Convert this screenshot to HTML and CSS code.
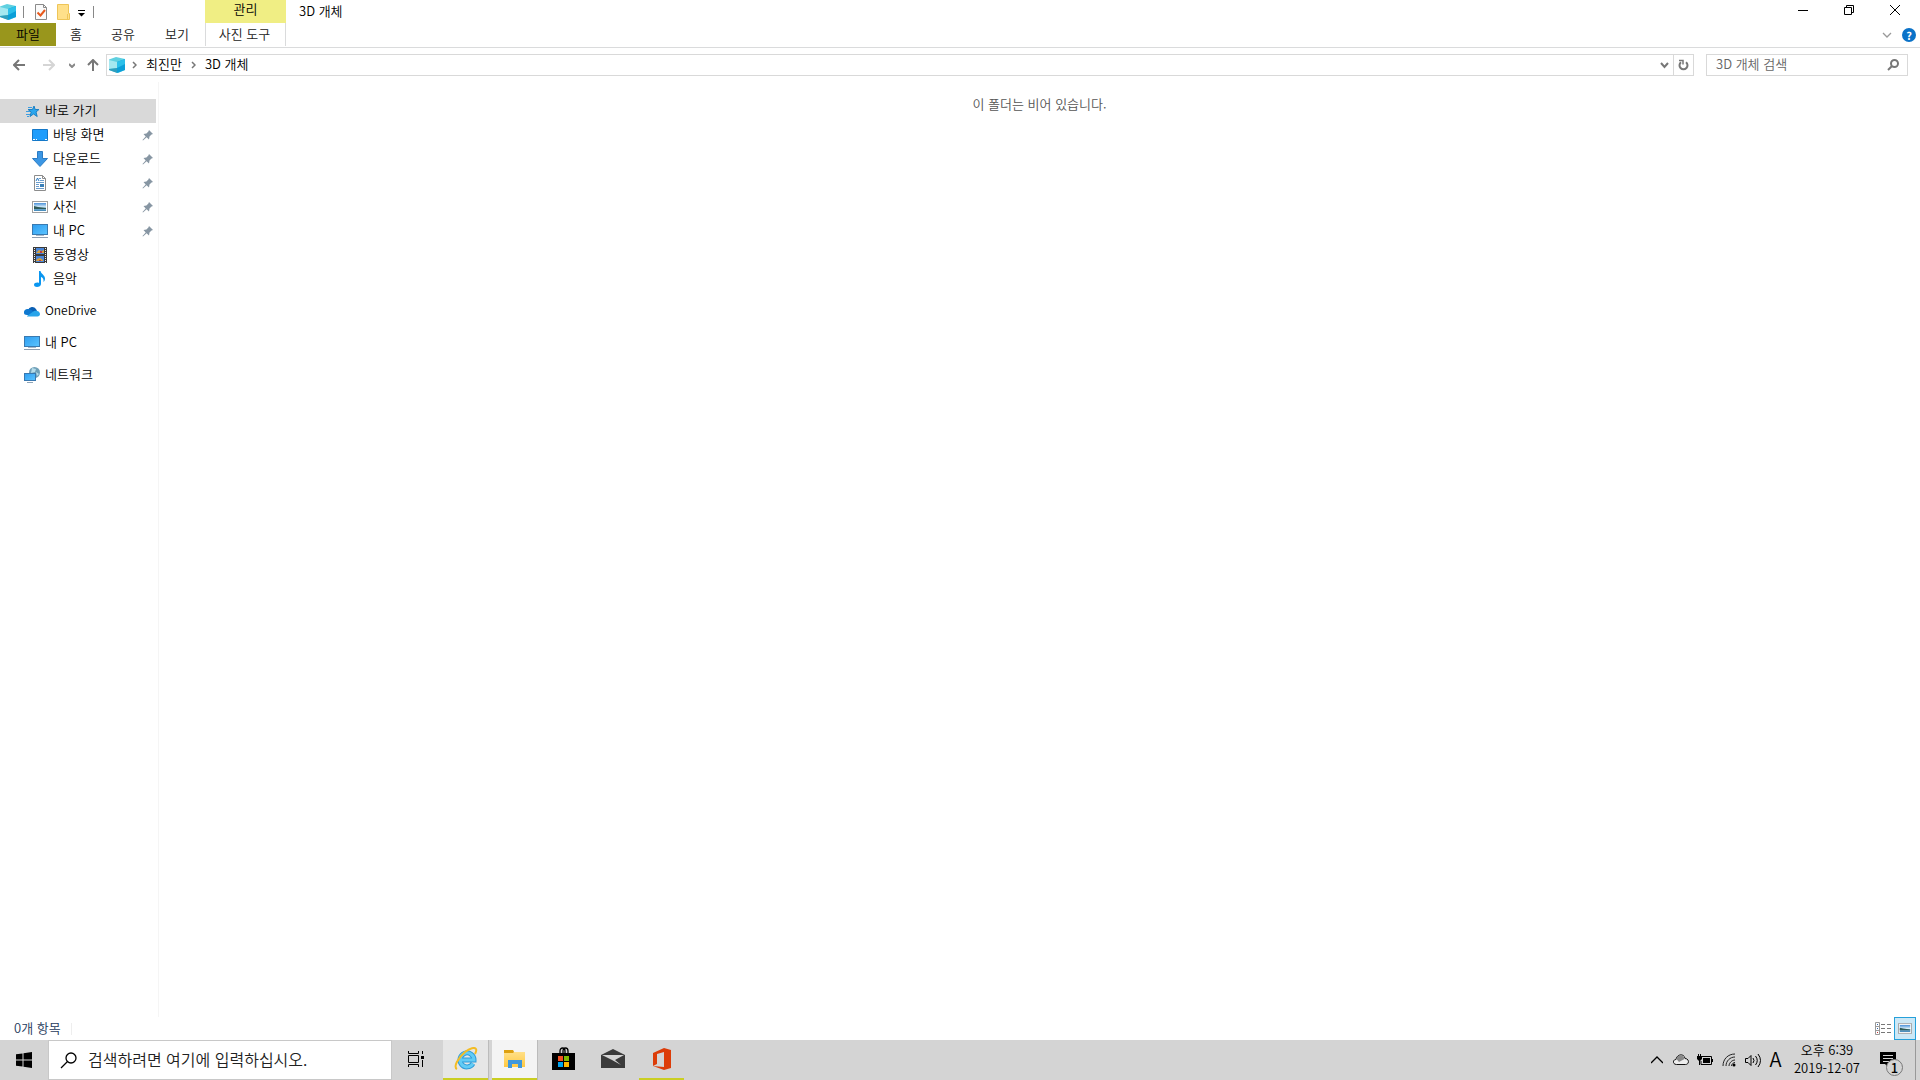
FILE: index.html
```html
<!DOCTYPE html>
<html lang="ko">
<head>
	<meta charset="utf-8" />
	<meta name="viewport" content="width=device-width,initial-scale=1.0" />
	<title>3D 개체</title>
	<link rel="stylesheet" href="styles.css">
</head>
<body>
<!-- shared icons -->
<svg class="defs" aria-hidden="true">
	<defs>
		<linearGradient id="blue" x1="0" y1="0" x2="1" y2="1">
			<stop offset="0" stop-color="#2d9df0"/>
			<stop offset="1" stop-color="#5cc4ff"/>
		</linearGradient>
		<linearGradient id="gold" x1="0" y1="0" x2="0" y2="1">
			<stop offset="0" stop-color="#ffe291"/>
			<stop offset="1" stop-color="#ffc941"/>
		</linearGradient>
		<linearGradient id="sky" x1="0" y1="0" x2="0" y2="1">
			<stop offset="0" stop-color="#4a90d9"/>
			<stop offset=".5" stop-color="#d8eefa"/>
			<stop offset=".6" stop-color="#8fc0dc"/>
			<stop offset="1" stop-color="#3f86b8"/>
		</linearGradient>
		<symbol id="cube" viewBox="0 0 16 16">
			<path d="M0 2.500L7 0l9 2v11l-7 3-9-3z" fill="#5fd0e0"/>
			<path d="M0 3l8 2v6l-8 1z" fill="#a5e8f0"/>
			<path d="M0 12l8-1v5l-8-3z" fill="#2f9fbe"/>
			<path d="M8 5l8-3v11l-8 3z" fill="#0b9fd8"/>
			<path d="M8 5l8-3v5l-8 4z" fill="#2cc0ea"/>
		</symbol>
		<symbol id="pc" viewBox="0 0 16 16">
			<rect x=".5" y="1.5" width="15" height="10" fill="url(#blue)" stroke="#3a7ab0"/>
			<path d="M4 12.5h8" stroke="#a8b8c8"/>
			<path d="M0 14.5h16" stroke="#8f9eb0"/>
		</symbol>
		<symbol id="pin" viewBox="0 0 12 12">
			<path d="M7 1l4 4-1.500.6-2 2L7 10.500 4.600 8.300 1 11.500l-.5-.5L3.700 7.400 1.500 5l2.900-.5 2-2z" fill="#8796a3"/>
		</symbol>
		<symbol id="picture" viewBox="0 0 16 12">
			<rect x=".5" y=".5" width="15" height="11" fill="#fff" stroke="#a0a0a0"/>
			<rect x="2" y="2" width="12" height="8" fill="url(#sky)"/>
			<path d="M2 5l4 1 8 1v1H2z" fill="#2f5a58"/>
		</symbol>
	</defs>
</svg>

<div class="desktop">
	<main class="window">
		<header class="titlebar">
			<div class="quick">
				<svg class="i16"><use href="#cube"/></svg>
				<i class="sep"></i>
				<button aria-label="속성"><svg width="12" height="16" viewBox="0 0 12 16"><path d="M.5.5h8l3 3v12H.5z" fill="#fafafa" stroke="#8a8a8a"/><path d="M8.500.5v3h3" fill="none" stroke="#8a8a8a"/><path d="M2.500 8.500l3 3L10 6" fill="none" stroke="#e8591c" stroke-width="2"/></svg></button>
				<button class="new" aria-label="새 폴더"><svg width="13" height="16" viewBox="0 0 13 16"><path d="M.5.5h11v9h1v6H.5z" fill="#ffe08a" stroke="#eec558"/><path d="M10.500 10v5" stroke="#eec558"/></svg></button>
				<button class="more" aria-label="빠른 실행 도구 모음"><svg width="7" height="7" viewBox="0 0 7 7"><path d="M0 .5h7" stroke="#000"/><path d="M0 3h7L3.500 6.500z"/></svg></button>
				<i class="sep"></i>
			</div>
			<div class="context">관리</div>
			<h1>3D 개체</h1>
			<div class="controls">
				<button aria-label="최소화"><svg width="10" height="10"><path d="M0 5.500h10" stroke="#000"/></svg></button>
				<button aria-label="이전 크기로 복원"><svg width="10" height="10"><path d="M.5 2.500h7v7h-7zM2.500 2.500v-2h7v7h-2" fill="none" stroke="#000"/></svg></button>
				<button aria-label="닫기"><svg width="10" height="10"><path d="M0 0l10 10M10 0L0 10" stroke="#000"/></svg></button>
			</div>
		</header>

		<nav class="ribbon">
			<button class="tab file">파일</button>
			<button class="tab home">홈</button>
			<button class="tab">공유</button>
			<button class="tab">보기</button>
			<button class="tab tools">사진 도구</button>
			<div class="ribbon-right">
				<button aria-label="리본 확장"><svg width="10" height="6"><path d="M1 1l4 4 4-4" fill="none" stroke="#999" stroke-width="1.300"/></svg></button>
				<button class="help" aria-label="도움말">?</button>
			</div>
		</nav>

		<div class="addressbar">
			<div class="history">
				<button aria-label="뒤로"><svg width="12" height="12"><path d="M12 6H1M6 1L1 6l5 5" fill="none" stroke="#777" stroke-width="2"/></svg></button>
				<button aria-label="앞으로"><svg width="12" height="12"><path d="M0 6h11M6 1l5 5-5 5" fill="none" stroke="#d5d5d5" stroke-width="2"/></svg></button>
				<button class="recent" aria-label="최근 위치"><svg width="6" height="5"><path d="M0 1l3 3 3-3" fill="none" stroke="#888" stroke-width="2"/></svg></button>
				<button class="up" aria-label="위로"><svg width="12" height="12"><path d="M6 12V1M1 6l5-5 5 5" fill="none" stroke="#777" stroke-width="2"/></svg></button>
			</div>
			<div class="path">
				<svg class="i16"><use href="#cube"/></svg>
				<svg class="arrow" width="5" height="8"><path d="M1 1l3 3-3 3" fill="none" stroke="#777" stroke-width="1.500"/></svg>
				<a href="#">최진만</a>
				<svg class="arrow" width="5" height="8"><path d="M1 1l3 3-3 3" fill="none" stroke="#777" stroke-width="1.500"/></svg>
				<a href="#">3D 개체</a>
				<button class="drop" aria-label="이전 위치"><svg width="9" height="7"><path d="M1 1l3.500 4L8 1" fill="none" stroke="#777" stroke-width="2"/></svg></button>
				<button class="refresh" aria-label="새로 고침"><svg width="11" height="12" viewBox="0 0 11 12"><path d="M8 3.200A4 4 0 1 1 3 3.200" fill="none" stroke="#777" stroke-width="2"/><path d="M1 1.500h4v4" fill="none" stroke="#777" stroke-width="1.500"/></svg></button>
			</div>
			<label class="search">
				<input type="text" placeholder="3D 개체 검색" aria-label="3D 개체 검색">
				<svg width="12" height="12"><circle cx="7.500" cy="4.500" r="3.500" fill="none" stroke="#777" stroke-width="2"/><path d="M5 7L1 11" stroke="#777" stroke-width="2"/></svg>
			</label>
		</div>

		<div class="body">
			<aside class="tree">
				<a class="root selected" href="#"><svg class="i16" viewBox="0 0 16 16"><path d="M10 3l1.200 3.500H15l-3 2.500 1.200 4.500-3.700-2.500L6 13.500l1.200-4.500L4 6.500h4.500z" fill="#2aa6ee" stroke="#1b80c4"/><path d="M4 4.500h4M2 8.500h4M2 11.500h4M3 13.500h2" stroke="#3c9de0"/></svg>바로 가기</a>
				<a href="#"><svg class="i16" viewBox="0 0 16 16"><path d="M.5 2.500h15v11H.5z" fill="#1e9dfc" stroke="#1478c8"/><path d="M1 12.500h2M4 12.500h1M13 12.500h2" stroke="#fff"/></svg>바탕 화면<svg class="pin"><use href="#pin"/></svg></a>
				<a href="#"><svg class="i16" viewBox="0 0 16 16"><path d="M5.500.5h5v7h5L8 15.500.5 7.500h5z" fill="#3b96e4" stroke="#2b7cc4"/></svg>다운로드<svg class="pin"><use href="#pin"/></svg></a>
				<a href="#"><svg class="i16" viewBox="0 0 16 16"><path d="M2.500.5h8l3 3v12h-11z" fill="#fff" stroke="#8c8c8c"/><path d="M10.500.5v3h3" fill="none" stroke="#8c8c8c"/><path d="M7 3.500h2M8 5.500h4M4 7.500h8M4 9.500h3M4 11.500h3M4 13.500h8" stroke="#6a9ccc"/><path d="M4 6l1.500-3L7 6" fill="none" stroke="#2878c0"/><path d="M8 9h4v3H8z" fill="#3a80b8"/></svg>문서<svg class="pin"><use href="#pin"/></svg></a>
				<a href="#"><svg class="i16"><use href="#picture"/></svg>사진<svg class="pin"><use href="#pin"/></svg></a>
				<a href="#"><svg class="i16"><use href="#pc"/></svg>내 PC<svg class="pin"><use href="#pin"/></svg></a>
				<a href="#"><svg class="i16" viewBox="0 0 16 16"><path d="M1 0h14v16H1z" fill="#3a3a3a"/><path d="M2.500 1v15M13.500 1v15" stroke="#eee" stroke-dasharray="1 1"/><path d="M4 1h8v6H4zM4 9h8v6H4z" fill="#4a86d8"/><path d="M5 5l2-2 3 1 2-1v3H4zM5 12l3-1 3 2v1H4z" fill="#d8a03a"/><path d="M8 4h2v2H8zM7 13h2v1H7z" fill="#b83a4a"/></svg>동영상</a>
				<a href="#"><svg class="i16" viewBox="0 0 16 16"><path d="M7 0h1.500c.5 3 4.500 4 4.500 7.500 0 1.500-.5 2.500-1.500 3.500.5-3-1-4.500-2.500-5V13c0 2-2 3-4 3-1.500 0-3-.6-3-2.200C2 12 5 11 7 12z" fill="#0a96f0"/></svg>음악</a>
				<a class="root space latin" href="#"><svg class="i16" viewBox="0 0 16 16"><path d="M4 7a4.500 4.500 0 0 1 8-1l1 2-7 4z" fill="#0a5fb4"/><path d="M0 10a3.500 3.500 0 0 1 4-4c3-.3 5 2 8 6H3c-2 0-3-1-3-2z" fill="#0f78d0"/><path d="M3 13l7-5c2-1 6 0 6 3 0 1.500-1 2.500-2.500 2.500H3z" fill="#28a4ea"/></svg>OneDrive</a>
				<a class="root space" href="#"><svg class="i16"><use href="#pc"/></svg>내 PC</a>
				<a class="root space" href="#"><svg class="i16" viewBox="0 0 16 16"><circle cx="10.500" cy="5.500" r="5.500" fill="#6fa0b8"/><path d="M8 1l4 1-1 3-4 1zM12 5l3 2-2 2z" fill="#b6dcea"/><rect x=".5" y="6.500" width="11" height="7" fill="url(#blue)" stroke="#3878b0"/><path d="M3 15.500h6" stroke="#8fa5b8"/></svg>네트워크</a>
			</aside>
			<section class="content">이 폴더는 비어 있습니다.</section>
		</div>

		<footer class="status">
			<span>0개 항목</span>
			<i class="sep"></i>
			<div class="views">
				<button aria-label="자세히"><svg width="16" height="13"><path d="M.5.5h4v12h-4zM.5 4.500h4M.5 8.500h4" fill="none" stroke="#999"/><path d="M6 2.500h4M12 2.500h4M6 6.500h4M12 6.500h4M6 10.500h4M12 10.500h4" stroke="#777"/><path d="M2 2.500h1M2 6.500h1" stroke="#36a"/><path d="M2 10.500h1" stroke="#c33"/></svg></button>
				<button class="on" aria-label="큰 아이콘"><svg width="14" height="11"><use href="#picture"/></svg></button>
			</div>
		</footer>
	</main>

	<footer class="taskbar">
		<button class="start" aria-label="시작"><svg width="16" height="16"><path d="M0 2.300L6.500 1.400v6.100H0zM7.500 1.200L16 0v7.500H7.500zM0 8.500h6.500v6.100L0 13.700zM7.500 8.500H16V16l-8.500-1.200z"/></svg></button>
		<label class="cortana">
			<svg width="17" height="17"><circle cx="11" cy="6" r="5" fill="none" stroke="#000" stroke-width="1.300"/><path d="M7.500 9.500L1 16" stroke="#000" stroke-width="1.300"/></svg>
			<input type="text" placeholder="검색하려면 여기에 입력하십시오." aria-label="검색">
		</label>
		<div class="apps">
			<button aria-label="작업 보기"><svg width="17" height="16"><path d="M.5 0v2.500h10V0M.5 16v-2.500h10V16M.5 4.500h10v7H.5zM14.500 0v3M14.500 9v7" fill="none" stroke="#000"/><path d="M13 5h3v3h-3z"/></svg></button>
			<button class="open" aria-label="Internet Explorer"><svg width="24" height="24" viewBox="0 0 24 24"><path d="M19 16.500a7 7 0 1 1 1-3.500H7" fill="none" stroke="#2f9bd8" stroke-width="5"/><path d="M19 16.500a7 7 0 1 1 1-3.500H7" fill="none" stroke="#62ccf5" stroke-width="3"/><path d="M3 22C-1 20 4 11 11 5c5-4 10-5 11-3 .6 1 0 3-1 5" fill="none" stroke="#f3bc24" stroke-width="2"/></svg></button>
			<button class="open active" aria-label="파일 탐색기"><svg width="22" height="20" viewBox="0 0 22 20"><path d="M0 1h9l1 2h11v15H0z" fill="url(#gold)"/><path d="M0 1h9l1 2-1 1H0z" fill="#dda010"/><path d="M4 19v-8h14v8h-4v-4H8v4z" fill="#3f98dc"/></svg></button>
			<button aria-label="Microsoft Store"><svg width="24" height="24" viewBox="0 0 24 24"><path d="M8 7V4c0-4 5-4 5 0v3M11 7V4c0-4 5-4 5 0v3" fill="none" stroke="#000" stroke-width="1.300"/><path d="M0 6h23v17H0z"/><path d="M6 9h5v5H6z" fill="#f25022"/><path d="M12 9h5v5h-5z" fill="#7fba00"/><path d="M6 15h5v5H6z" fill="#00a4ef"/><path d="M12 15h5v5h-5z" fill="#ffb900"/></svg></button>
			<button aria-label="메일"><svg width="24" height="20" viewBox="0 0 24 20"><path d="M0 6l12-6 12 6v13H0z" fill="#3b3b3b"/><path d="M1 6h22l-9 5 6 5-9-5z" fill="#d5d5d5"/></svg></button>
			<button class="running" aria-label="Office"><svg width="18" height="22" viewBox="0 0 18 22"><path d="M0 5l11-5 7 2v18l-7 2-11-4 11 1V4L4 6v10l-4 2z" fill="#dc3c08"/></svg></button>
		</div>
		<div class="tray">
			<button aria-label="숨겨진 아이콘 표시"><svg width="12" height="8"><path d="M0 7l6-6 6 6" fill="none" stroke="#000" stroke-width="1.300"/></svg></button>
			<button aria-label="OneDrive"><svg width="16" height="12"><path d="M3.500 10.500C-.5 10.500-.5 5.500 3 5.500 4-.5 11.500-.5 12 4.500c4.500 0 4.500 6 .5 6z" fill="#eee" stroke="#111"/><path d="M3.500 5c1-5 7-5 8 0L6 8z" fill="#888"/></svg></button>
			<button aria-label="배터리"><svg width="16" height="12"><path d="M5 2.500h9.500v8H4V7" fill="none" stroke="#000"/><path d="M6 4h7v5H6zM15 5h1v3h-1zM0 2h5v3L3 7H2L0 5zM1 0h1v2H1zM3 0h1v2H3zM2 7h1v4H2z"/></svg></button>
			<button aria-label="네트워크"><svg width="14" height="14"><g fill="none" stroke="#222"><path d="M1 13C1 6 6 1 13 1M4 13c0-5 4-9 9-9M7 13c0-3 3-6 6-6"/><path d="M9.500 13c0-2 2-3.500 3.500-3.500"/></g><circle cx="12" cy="12" r="1.500"/></svg></button>
			<button aria-label="스피커"><svg width="17" height="13"><path d="M.5 4.500H3l3-3v10l-3-3H.5zM8 4q2 2.500 0 5M10.500 2q3.500 4.500 0 9M13 0q5 6.500 0 13" fill="none" stroke="#000"/></svg></button>
			<button class="ime" aria-label="영문 입력">A</button>
			<button class="clock"><time>오후 6:39</time><time>2019-12-07</time></button>
			<button class="notice" aria-label="알림 1개"><svg width="16" height="16"><path d="M0 0h16v12H8v3l-3-3H0z"/><path d="M3 3.500h10M3 6.500h10M3 9.500h6" stroke="#d4d4d4"/></svg><span class="badge">1</span></button>
			<button class="peek" aria-label="바탕 화면 보기"></button>
		</div>
	</footer>
</div>
</body>
</html>
```
FILE: styles.css
```css
* {
	margin: 0;
	padding: 0;
	box-sizing: border-box;
}
body, button, input {
	font-family: "Noto Sans CJK KR", sans-serif;
	font-size: 13px;
	font-weight: 350;
	line-height: 20px;
	color: #000;
}
button {
	border: 0;
	background: none;
	display: flex;
	align-items: center;
	justify-content: center;
}
a {
	color: #000;
	text-decoration: none;
}
input {
	border: 0;
	outline: 0;
	background: none;
	flex: 1;
	min-width: 0;
}
svg {
	flex: none;
}
.defs {
	position: absolute;
	width: 0;
	height: 0;
}
.i16 {
	width: 16px;
	height: 16px;
}
.desktop {
	height: 100vh;
	display: flex;
	flex-direction: column;
}
.window {
	flex: 1;
	min-height: 0;
	display: flex;
	flex-direction: column;
	background: #fff;
}

/* title bar */
.titlebar {
	display: flex;
	height: 23px;
}
.quick {
	width: 205px;
	display: flex;
	align-items: center;
}
.quick button {
	margin-right: 10px;
}
.quick .new {
	margin-right: 8px;
}
.quick .more {
	height: 23px;
	padding-top: 3px;
	margin-right: 8px;
}
.quick .sep {
	width: 1px;
	height: 12px;
	margin: 0 11px 0 7px;
	background: #888;
}
.quick .more + .sep {
	margin: 0;
}
.context {
	width: 81px;
	height: 23px;
	line-height: 18px;
	text-align: center;
	background: #f0ee84;
}
h1 {
	font-size: 13px;
	font-weight: 350;
	line-height: 22px;
	margin-left: 13px;
}
.controls {
	display: flex;
	margin-left: auto;
	padding-right: 2px;
}
.controls button {
	width: 46px;
	height: 20px;
}

/* ribbon */
.ribbon {
	display: flex;
	height: 25px;
	padding-bottom: 1px;
	border-bottom: 1px solid #dadbdc;
}
.tab {
	width: 54px;
	padding-bottom: 2px;
	color: #222;
}
.file {
	width: 56px;
	color: #000;
	background: #99961c;
}
.home {
	width: 40px;
}
.tools {
	width: 81px;
	margin-left: 1px;
	padding-right: 2px;
	border: solid #dadbdc;
	border-width: 0 1px;
}
.ribbon-right {
	display: flex;
	align-items: center;
	gap: 10px;
	margin-left: auto;
	padding-right: 4px;
}
.help {
	width: 14px;
	height: 14px;
	border-radius: 50%;
	background: #0a72c8;
	color: #fff;
	font-size: 11px;
	font-weight: bold;
}

/* address bar */
.addressbar {
	display: flex;
	padding: 6px 12px 6px 0;
}
.history {
	display: flex;
	width: 106px;
	padding-left: 13px;
}
.history button {
	width: 12px;
	margin-right: 18px;
}
.history .recent {
	width: 6px;
	margin: 0 12px 0 -4px;
}
.history .up {
	margin: 0;
}
.path, .search {
	display: flex;
	align-items: center;
	height: 22px;
	border: 1px solid #d9d9d9;
}
.path {
	flex: 1;
	padding-left: 2px;
}
.path a {
	padding-bottom: 2px;
}
.arrow {
	margin: 0 9px 0 7px;
}
a + .arrow {
	margin-left: 9px;
}
.drop {
	width: 18px;
	height: 20px;
	margin-left: auto;
}
.refresh {
	width: 20px;
	height: 20px;
	border-left: 1px solid #d9d9d9;
}
.search {
	width: 202px;
	margin-left: 12px;
	padding: 0 8px 0 9px;
}
.search input {
	padding-bottom: 2px;
}
.search input::placeholder {
	color: #666;
}

/* folder tree and content */
.body {
	flex: 1;
	display: flex;
}
.tree {
	width: 159px;
	padding: 17px 2px 0 0;
	border-right: 1px solid #f5f5f5;
}
.tree a {
	display: flex;
	align-items: center;
	gap: 5px;
	height: 24px;
	padding: 0 2px 2px 32px;
}
.tree svg {
	margin-top: 2px;
}
.tree .root {
	padding-left: 24px;
}
.tree .latin {
	font-size: 12px;
}
.tree .selected {
	background: #d9d9d9;
}
.tree .space {
	margin-top: 8px;
}
.pin {
	width: 12px;
	height: 12px;
	margin-left: auto;
}
.content {
	flex: 1;
	padding-top: 12px;
	text-align: center;
	color: #555;
}

/* status bar */
.status {
	display: flex;
	align-items: center;
	height: 23px;
	padding: 0 4px 0 14px;
	color: #1e395b;
}
.status span {
	padding-bottom: 2px;
}
.status .sep {
	width: 1px;
	height: 12px;
	margin-left: 10px;
	background: #eee;
}
.views {
	display: flex;
	margin-left: auto;
}
.views button {
	width: 22px;
	height: 23px;
}
.views .on {
	border: 1px solid #26a0da;
	background: #cce8f6;
}

/* taskbar */
.taskbar {
	display: flex;
	height: 40px;
	background: #d4d4d4;
}
.start {
	width: 48px;
}
.cortana {
	display: flex;
	align-items: center;
	gap: 11px;
	width: 344px;
	padding-left: 11px;
	border: 1px solid #c8c8c8;
	background: #fff;
}
.cortana input {
	padding-bottom: 2px;
	font-size: 16px;
	line-height: 24px;
}
.cortana input::placeholder {
	color: #222;
}
.apps {
	display: flex;
	gap: 4px;
	padding-left: 2px;
}
.apps button {
	width: 45px;
	border-bottom: 2px solid transparent;
}
.apps .open {
	background: #e6e6e6;
	border-bottom-color: #cace22;
	box-shadow: 1px 0 #bbb;
}
.apps .active {
	background: #f4f4f4;
}
.apps .running {
	border-bottom-color: #cace22;
}
.tray {
	display: flex;
	margin-left: auto;
}
.tray button {
	width: 24px;
}
.tray .ime {
	width: 21px;
	padding-bottom: 2px;
	font-size: 20px;
}
.tray .clock {
	width: 82px;
	padding-bottom: 2px;
	flex-direction: column;
	line-height: 18px;
}
.tray .notice {
	position: relative;
	width: 47px;
	padding-right: 8px;
}
.badge {
	position: absolute;
	left: 18px;
	top: 19px;
	width: 17px;
	height: 17px;
	border: 1px solid #777;
	border-radius: 50%;
	background: #d4d4d4;
	font-size: 13px;
	font-weight: 500;
	line-height: 15px;
}
.tray .peek {
	width: 5px;
	border-left: 1px solid #999;
}
```
